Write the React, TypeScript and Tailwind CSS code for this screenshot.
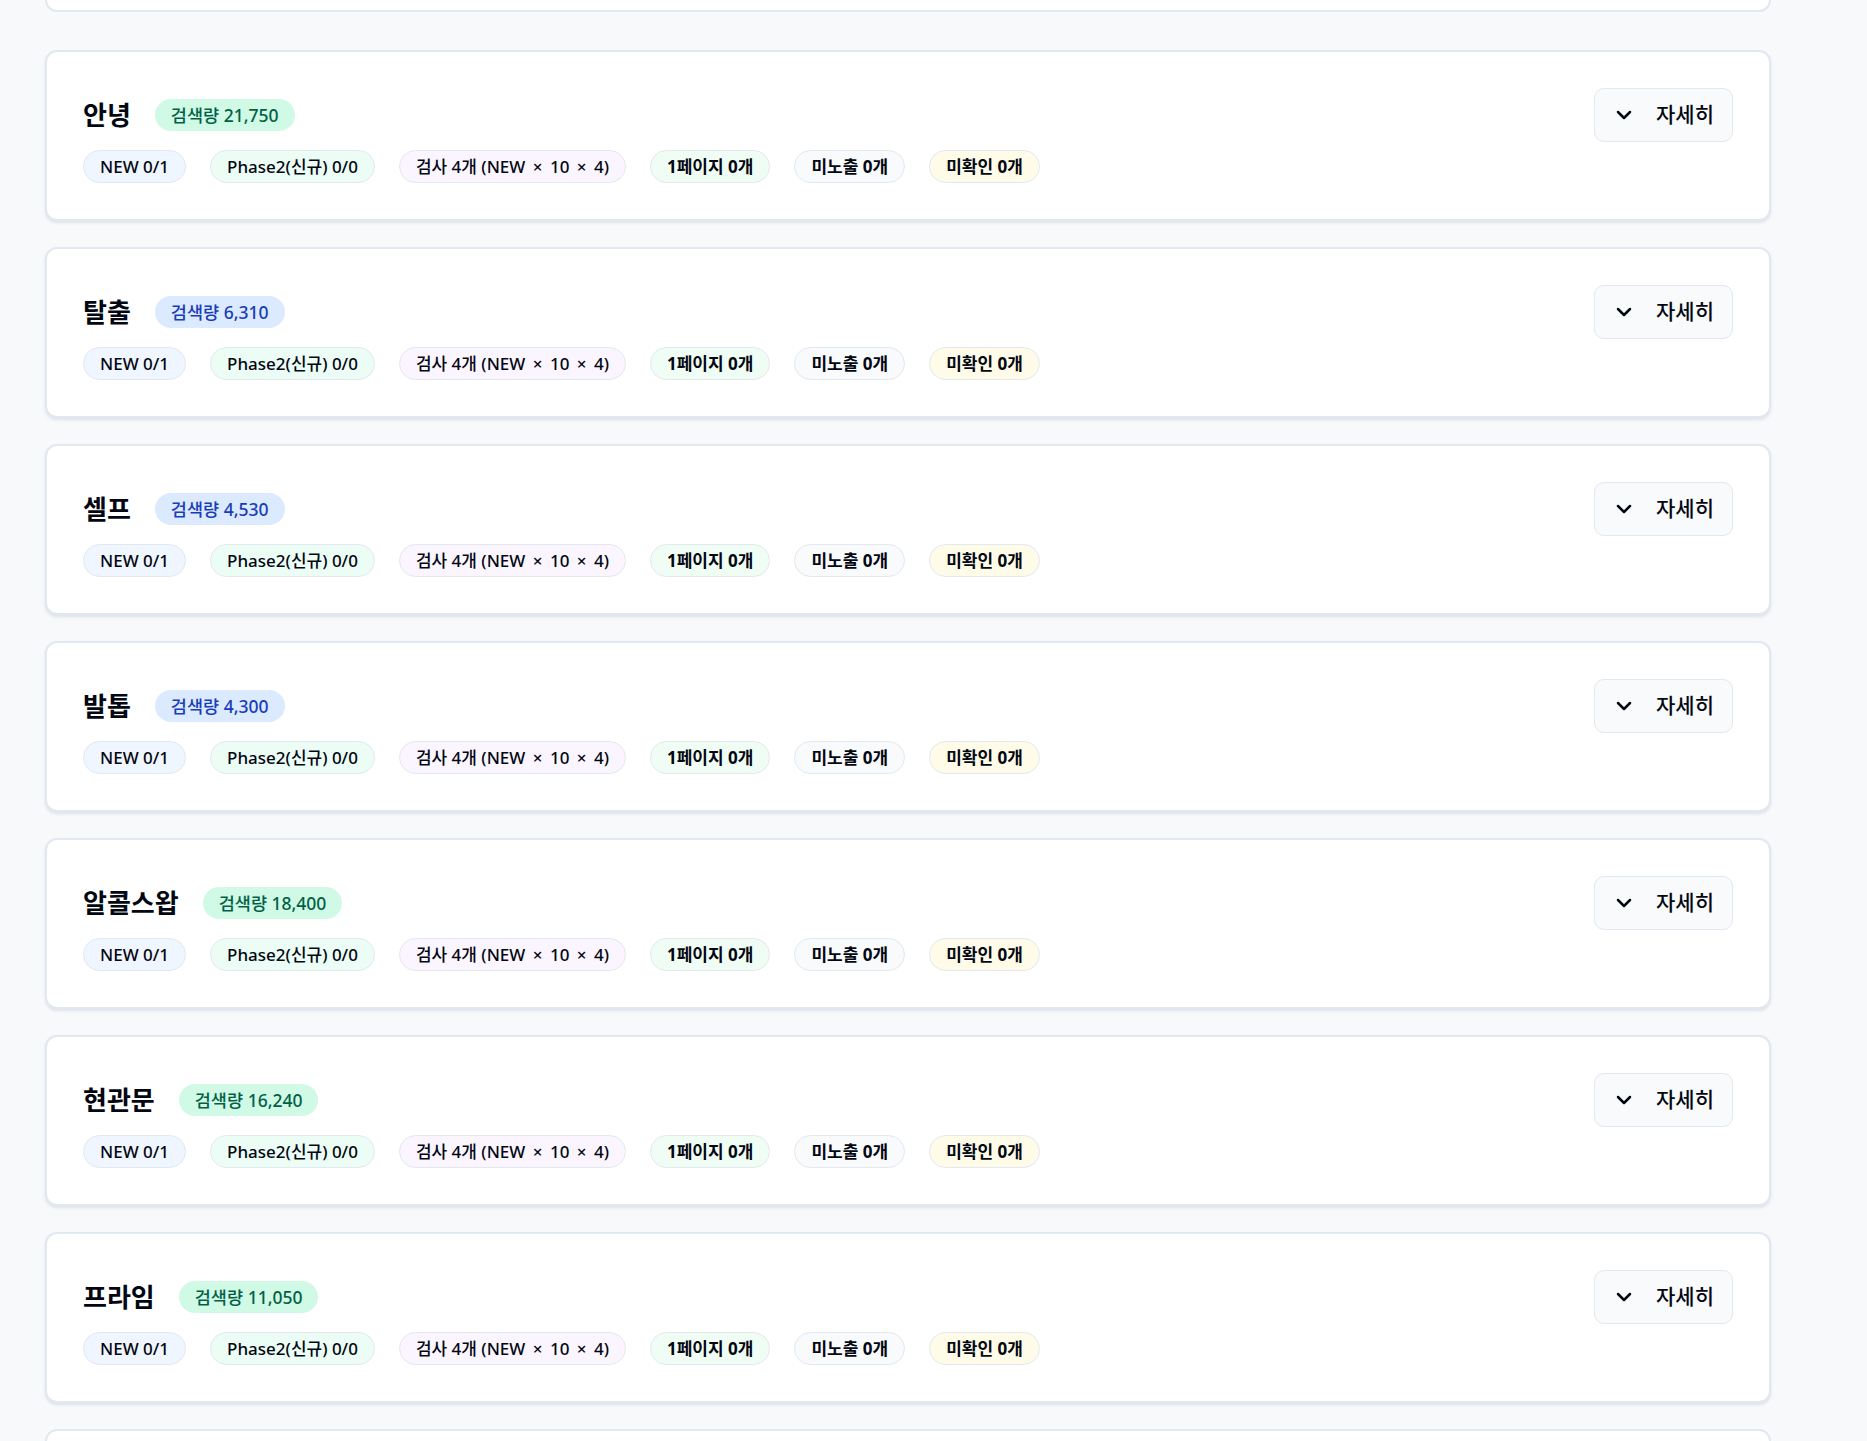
import { ChevronDown } from 'lucide-react';

type Keyword = {
  name: string;
  volume: number;
};

const KEYWORDS: Keyword[] = [
  { name: '안녕', volume: 21750 },
  { name: '탈출', volume: 6310 },
  { name: '셀프', volume: 4530 },
  { name: '발톱', volume: 4300 },
  { name: '알콜스왑', volume: 18400 },
  { name: '현관문', volume: 16240 },
  { name: '프라임', volume: 11050 },
];

const FONT = { fontFamily: '"Noto Sans", "Noto Sans CJK KR", sans-serif' };

function Chip({ className, children }: { className: string; children: React.ReactNode }) {
  return (
    <span
      className={`inline-flex h-[33px] items-center rounded-full border border-slate-200 px-4 text-[17px] leading-6 text-gray-950 ${className}`}
    >
      <span>{children}</span>
    </span>
  );
}

function Times() {
  return <span className="mx-[3px]">×</span>;
}

function KeywordCard({ keyword }: { keyword: Keyword }) {
  const high = keyword.volume >= 10000;
  return (
    <div className="rounded-xl border-2 border-slate-200 bg-white p-9 shadow-[0_2px_3px_rgba(148,163,184,0.25)]">
      <div className="flex h-[54px] items-center justify-between">
        <div className="flex items-center gap-6">
          <h3 className="text-[26px] font-bold text-gray-950">{keyword.name}</h3>
          <span
            className={`rounded-full px-4 py-[3px] text-[17.5px] font-medium ${
              high ? 'bg-emerald-100 text-emerald-800' : 'bg-blue-100 text-blue-800'
            }`}
          >
            검색량 {keyword.volume.toLocaleString('en-US')}
          </span>
        </div>
        <button className="flex h-[54px] items-center gap-5 rounded-[10px] border border-slate-200 bg-slate-50 pl-[17px] pr-[18px] text-[21px] font-medium text-gray-950">
          <ChevronDown size={24} strokeWidth={2.5} />
          자세히
        </button>
      </div>
      <div className="mt-2 flex flex-wrap items-center gap-6">
        <Chip className="bg-blue-50 font-medium">NEW 0/1</Chip>
        <Chip className="bg-emerald-50 font-medium">Phase2(신규) 0/0</Chip>
        <Chip className="bg-purple-50 font-medium">
          검사 4개 (NEW <Times /> 10 <Times /> 4)
        </Chip>
        <Chip className="bg-green-50 font-bold">1페이지 0개</Chip>
        <Chip className="bg-slate-50 font-bold">미노출 0개</Chip>
        <Chip className="bg-yellow-50 font-bold">미확인 0개</Chip>
      </div>
    </div>
  );
}

export default function App() {
  return (
    <div className="min-h-screen overflow-hidden bg-[#f8f9fb]" style={FONT}>
      <div className="w-[1771px] pl-[45px]">
        <div className="h-3 rounded-b-xl border-2 border-t-0 border-slate-200 bg-white" />
        <div className="mt-[38px] flex flex-col gap-[26px]">
          {KEYWORDS.map((k) => (
            <KeywordCard key={k.name} keyword={k} />
          ))}
          <div className="h-24 rounded-xl border-2 border-slate-200 bg-white" />
        </div>
      </div>
    </div>
  );
}
